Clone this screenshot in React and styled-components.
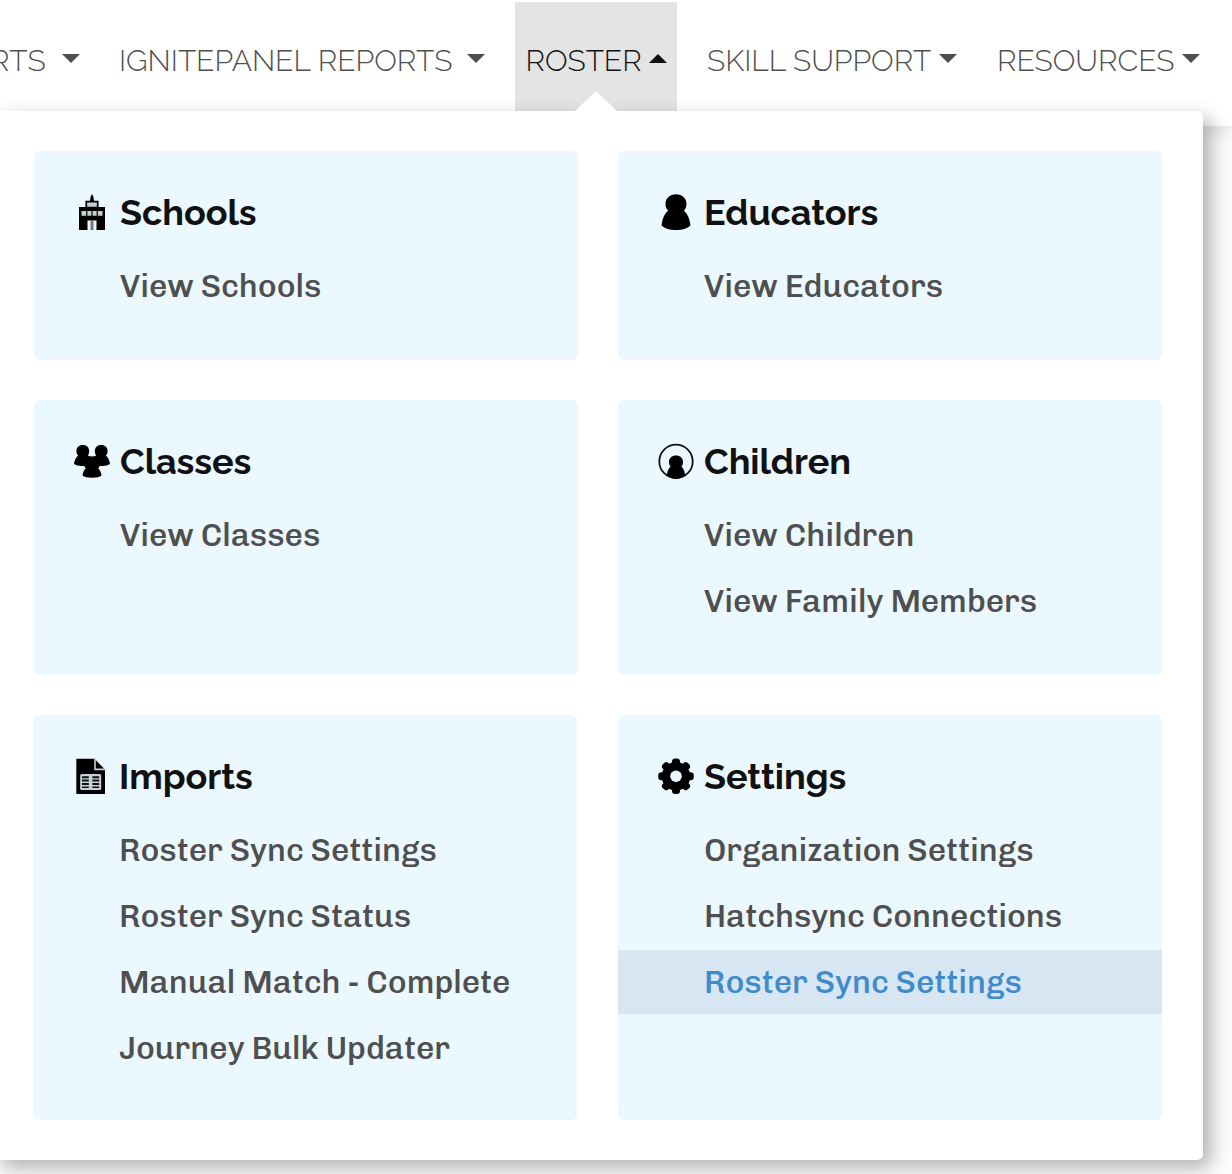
import React from 'react';
import styled, { createGlobalStyle } from 'styled-components';

const GlobalStyle = createGlobalStyle`
  *, *::before, *::after { box-sizing: border-box; }
  body {
    margin: 0;
    background: #fdfdfd;
    overflow: hidden;
  }
`;

const headingFont = `Raleway, Lato, "Open Sans", sans-serif`;
const linkFont = `Chivo, Inter, Roboto, sans-serif`;

const Page = styled.div`
  height: 1174px;
  overflow: hidden;
`;

const Header = styled.header`
  position: relative;
  height: 126px;
  padding: 2px 22px 15px 0;
  background: #fff;
  box-shadow: 0 0 20px rgba(0, 0, 0, 0.2);
`;

const Nav = styled.nav`
  display: flex;
  justify-content: flex-end;
  gap: 20px;
  height: 109px;
`;

const NavItem = styled.a`
  position: relative;
  flex: none;
  display: flex;
  justify-content: space-between;
  align-items: center;
  width: ${(p) => p.$width}px;
  padding: 8px 10px 0 ${(p) => p.$inset ?? 10}px;
  font: 330 30px/36px ${headingFont};
  white-space: nowrap;
  text-decoration: none;
  color: ${(p) => (p.$active ? '#111' : '#4f4f4f')};
  background: ${(p) => (p.$active ? '#e4e4e4' : 'transparent')};
`;

const Caret = styled.span`
  width: 0;
  height: 0;
  margin-bottom: 4px;
  border: 9px solid transparent;
  border-width: ${(p) => (p.$up ? '0 9px 9px' : '9px 9px 0')};
  border-${(p) => (p.$up ? 'bottom' : 'top')}-color: currentColor;
`;

const Pointer = styled.span`
  position: absolute;
  z-index: 3;
  left: 60px;
  bottom: 0;
  width: 0;
  height: 0;
  border: solid transparent;
  border-width: 0 21px 20px;
  border-bottom-color: #fff;
`;

const MegaMenu = styled.main`
  position: relative;
  z-index: 2;
  display: grid;
  grid-template-columns: 544px 544px;
  grid-template-rows: 209px 275px 405px;
  gap: 40px;
  width: 1210px;
  height: 1049px;
  margin: -15px 0 0 -7px;
  padding: 40px 41px;
  border-radius: 6px;
  background: #fff;
  box-shadow: 8px 8px 20px rgba(0, 0, 0, 0.3);
`;

const Card = styled.section`
  padding-top: 41px;
  margin: 0 ${(p) => p.$shift || 0}px 0 -${(p) => p.$shift || 0}px;
  border-radius: 6px;
  background: #ebf8ff;
`;

const CardHeading = styled.h2`
  display: flex;
  align-items: center;
  gap: 10px;
  height: 40px;
  margin: 0 0 22px;
  padding-left: 40px;
  font: 700 36px/40px ${headingFont};
  letter-spacing: -0.05px;
  color: #111;
`;

const MenuIcon = styled.svg`
  flex: none;
  width: 36px;
  height: 36px;
  filter: blur(0.45px);
`;

const LinkList = styled.ul`
  display: flex;
  flex-direction: column;
  gap: 2px;
  margin: 0;
  padding: 0;
  list-style: none;
`;

const MenuLink = styled.a`
  display: block;
  padding-left: 86px;
  font: 460 32px/64px ${linkFont};
  letter-spacing: -0.09px;
  text-decoration: none;
  color: ${(p) => (p.$active ? '#428bca' : '#4f4f4f')};
  background: ${(p) => (p.$active ? '#d6e7f3' : 'transparent')};
`;

const Svg = ({ children }) => (
  <MenuIcon viewBox="0 0 36 36" fill="#000" aria-hidden="true">
    {children}
  </MenuIcon>
);

const SchoolIcon = () => (
  <Svg>
    <path d="M18 0l1.300 2.500.8 4.500h-4.200l.8-4.500z" />
    <path fill="#c4d0d6" stroke="#000" strokeWidth="1.700" d="M12.300 7.600h11.400v6H12.300z" />
    <path d="M5 13h26v23h-8.500V26.500h-9V36H5z" />
    <path fill="#c4d0d6" d="M7.500 17h4.700v4.800H7.500zM13.400 17h4v4.800h-4zM18.600 17h4v4.800h-4zM23.800 17h4.700v4.800h-4.700z" />
    <path fill="#777" d="M16.500 26.500h3V36h-3z" />
  </Svg>
);

const PawnIcon = () => (
  <Svg>
    <path d="M18 .3c6 0 10.500 4 10.500 9.500 0 3-.9 5.200-2.600 7 3.600 3 6 8 6.500 14.700C29.500 34.600 24 36 18 36S6.500 34.600 3.600 31.500C4.100 24.800 6.500 19.800 10.100 16.800 8.400 15 7.500 12.800 7.500 9.800 7.500 4.300 12 .3 18 .3z" />
  </Svg>
);

const GroupIcon = () => (
  <Svg>
    <path d="M8.800 2c4 0 6.400 2.600 6.400 6 0 2-.5 3.400-1.500 4.600 1 .5 2 .9 4.300.9s3.300-.4 4.300-.9C21.300 11.400 20.800 10 20.800 8c0-3.400 2.400-6 6.400-6s6.400 2.600 6.400 6c0 2-.6 3.400-1.700 4.600 2.300 1.900 3.800 5 4.100 8.500-2.300 1.600-6 2.200-10.300 1.800-.3.900-.8 1.700-1.500 2.400 1.800 1.800 3 4.600 3.300 7.300-1.700 1.400-5 2.200-9.500 2.200s-7.800-.8-9.500-2.200c.3-2.700 1.500-5.500 3.300-7.300-.7-.7-1.200-1.500-1.500-2.400C6 23.300 2.300 22.700 0 21.100c.3-3.500 1.800-6.600 4.100-8.500C3 11.400 2.400 10 2.400 8c0-3.400 2.400-6 6.400-6z" />
  </Svg>
);

const ChildIcon = () => (
  <Svg>
    <circle cx="18" cy="18.400" r="16.700" fill="none" stroke="#111" strokeWidth="1.800" />
    <path d="M18 12.600c4.200 0 7 2.700 7 6.400 0 1.900-.6 3.300-1.500 4.500 2 2 3.400 5.200 3.700 9C24.500 35 21 35.800 18 35.800s-6.500-.8-9.200-3.300c.3-3.800 1.700-7 3.700-9-.9-1.200-1.500-2.600-1.500-4.500 0-3.700 2.800-6.400 7-6.400z" />
  </Svg>
);

const ImportIcon = () => (
  <Svg>
    <path d="M3.300.8h18.200L32 11.600V36H3.300z" />
    <path fill="none" stroke="#c4d0d6" strokeWidth="1.600" d="M22 .6v10.800h10" />
    <rect x="7.200" y="16" width="21" height="16" rx="1.500" fill="#c4d0d6" />
    <path fill="#111" d="M9 18.200h6.800v2H9zM9 21.600h6.800v2H9zM9 25h6.800v2H9zM9 28.400h6.800v1.700H9zM19.400 18.200h6.800v2h-6.800zM19.400 21.600h6.800v2h-6.800zM19.400 25h6.800v2h-6.800zM19.400 28.400h6.800v1.700h-6.800z" />
  </Svg>
);

const GearIcon = () => (
  <Svg>
    {[0, 45, 90, 135].map((angle) => (
      <rect key={angle} x="14" y="0.500" width="8" height="35.500" rx="3.200" transform={`rotate(${angle} 18 18.250)`} />
    ))}
    <circle cx="18" cy="18.250" r="14.300" />
    <circle cx="18" cy="18.250" r="5.800" fill="#ebf8ff" />
  </Svg>
);

const navItems = [
  { label: 'REPORTS', width: 188 },
  { label: 'IGNITEPANEL REPORTS', width: 386 },
  { label: 'ROSTER', width: 162, inset: 10.5, active: true },
  { label: 'SKILL SUPPORT', width: 270 },
  { label: 'RESOURCES', width: 223 },
];

const FirstLabel = styled.span`
  flex: 1;
  margin-right: 16px;
  text-align: right;
`;

const cards = [
  { title: 'Schools', icon: SchoolIcon, links: ['View Schools'] },
  { title: 'Educators', icon: PawnIcon, links: ['View Educators'] },
  { title: 'Classes', icon: GroupIcon, links: ['View Classes'] },
  { title: 'Children', icon: ChildIcon, links: ['View Children', 'View Family Members'] },
  {
    title: 'Imports',
    icon: ImportIcon,
    shift: 1,
    links: ['Roster Sync Settings', 'Roster Sync Status', 'Manual Match - Complete', 'Journey Bulk Updater'],
  },
  {
    title: 'Settings',
    icon: GearIcon,
    links: ['Organization Settings', 'Hatchsync Connections', 'Roster Sync Settings'],
    current: 2,
  },
];

export default function App() {
  return (
    <Page>
      <GlobalStyle />
      <Header>
        <Nav>
          {navItems.map((item, i) => (
            <NavItem key={item.label} $width={item.width} $inset={item.inset} $active={item.active}>
              {i === 0 ? <FirstLabel>{item.label}</FirstLabel> : item.label}
              <Caret $up={item.active} />
              {item.active && <Pointer />}
            </NavItem>
          ))}
        </Nav>
      </Header>
      <MegaMenu>
        {cards.map(({ title, icon: Icon, links, shift, current }) => (
          <Card key={title} $shift={shift}>
            <CardHeading>
              <Icon />
              {title}
            </CardHeading>
            <LinkList>
              {links.map((link, i) => (
                <li key={link}>
                  <MenuLink $active={i === current}>{link}</MenuLink>
                </li>
              ))}
            </LinkList>
          </Card>
        ))}
      </MegaMenu>
    </Page>
  );
}
